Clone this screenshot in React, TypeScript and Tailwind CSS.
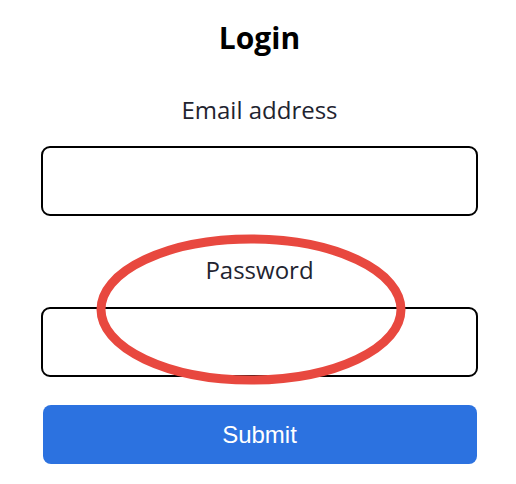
import React from 'react';

const App: React.FC = () => {
  return (
    <div className="relative w-[516px] h-[484px] bg-white overflow-hidden">
      <form
        className="w-[437px] ml-[41px] flex flex-col items-center pt-[20px]"
        style={{ fontFamily: '"Open Sans", "Noto Sans", sans-serif' }}
        onSubmit={(e) => e.preventDefault()}
      >
        <h1 className="text-[30px] leading-[36px] font-bold text-black">Login</h1>

        <label htmlFor="email" className="mt-[38px] text-[24px] leading-[32px] text-[#1f2430]">
          Email address
        </label>
        <input
          id="email"
          type="email"
          className="mt-[20px] w-full h-[70px] border-2 border-black rounded-[9px] px-3 outline-none"
        />

        <label htmlFor="password" className="mt-[38px] text-[24px] leading-[32px] text-[#1f2430]">
          Password
        </label>
        <input
          id="password"
          type="password"
          className="mt-[21px] w-full h-[70px] border-2 border-black rounded-[9px] px-3 outline-none"
        />

        <button
          type="submit"
          className="mt-[28px] w-[434px] h-[59px] rounded-[8px] bg-[#2c72e0] text-white text-[24px]"
          style={{ fontFamily: '"Liberation Sans", Arial, sans-serif' }}
        >
          Submit
        </button>
      </form>

      {/* red ring drawn over the password field */}
      <svg
        className="absolute left-0 top-0 pointer-events-none"
        width="516"
        height="484"
        viewBox="0 0 516 484"
      >
        <ellipse cx="251" cy="309.5" rx="150" ry="70.5" fill="none" stroke="#e8483f" strokeWidth="9" />
      </svg>
    </div>
  );
};

export default App;
